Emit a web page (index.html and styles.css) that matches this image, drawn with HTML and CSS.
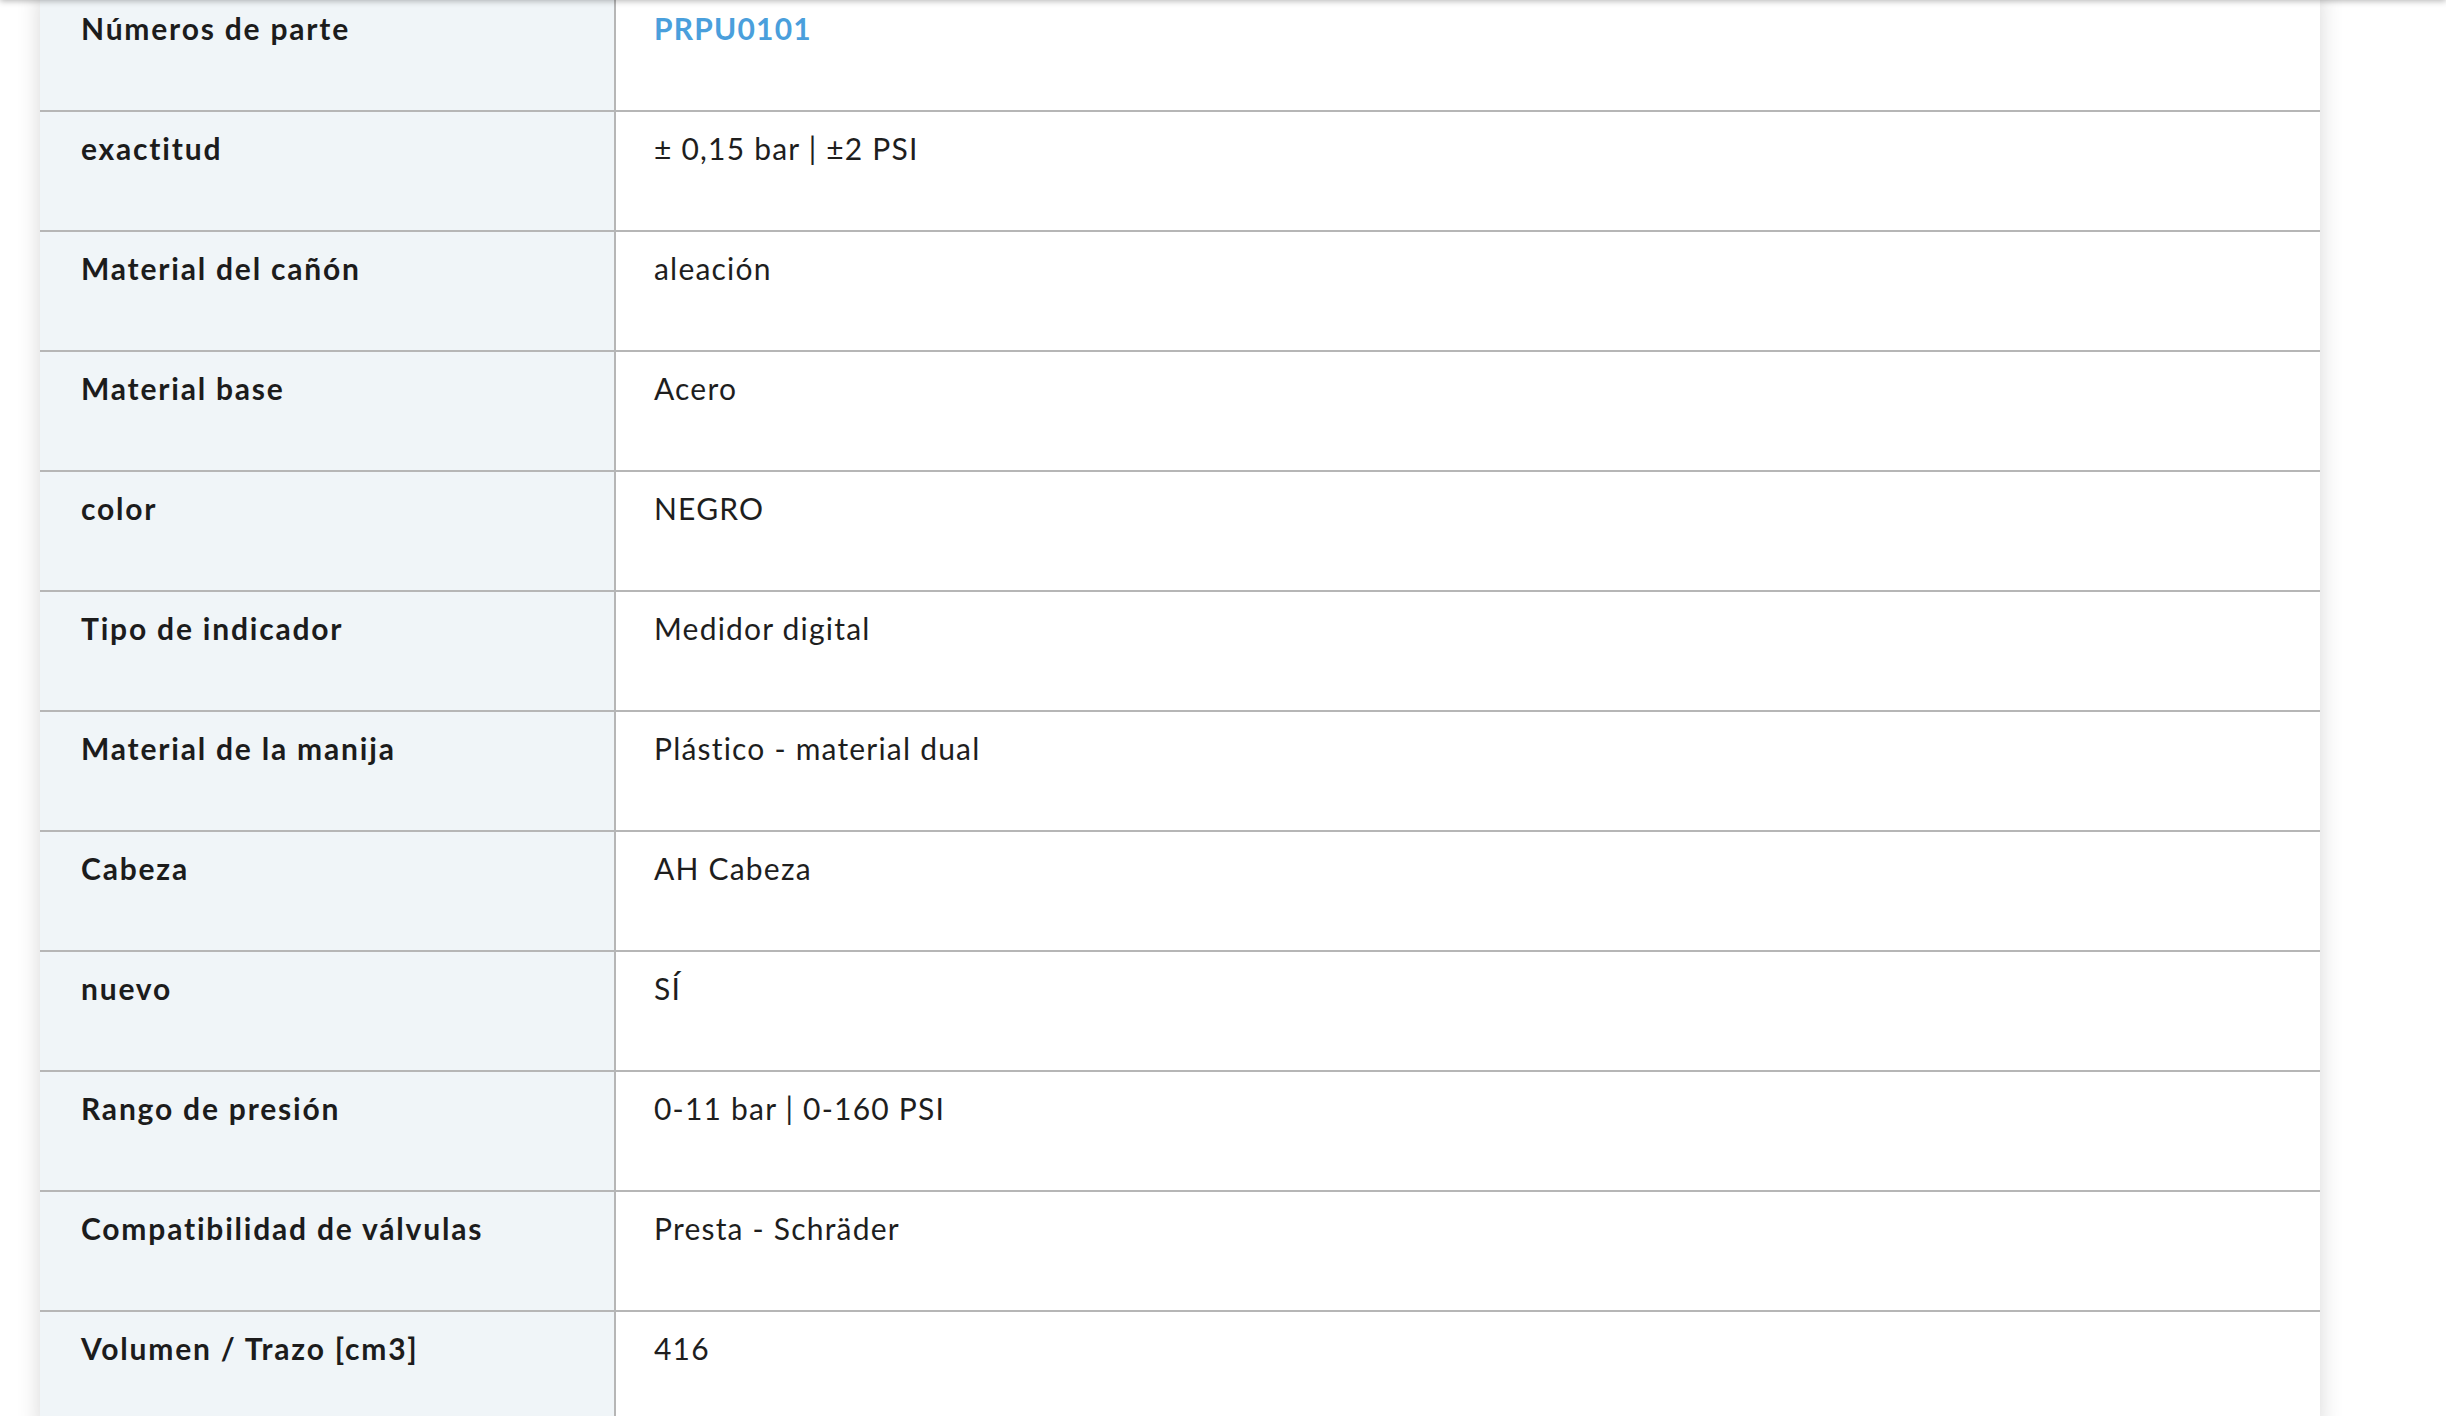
FILE: index.html
```html
<!DOCTYPE html>
<html lang="es">
<head>
<meta charset="utf-8">
<title>Especificaciones</title>
<link rel="stylesheet" href="styles.css">
</head>
<body>
<div class="topbar"></div>
<main class="page">
  <section class="specs">
    <div class="row"><div class="label">Números de parte</div><div class="value"><a class="part" href="#">PRPU0101</a></div></div>
    <div class="row"><div class="label">exactitud</div><div class="value">± 0,15 bar | ±2 PSI</div></div>
    <div class="row"><div class="label">Material del cañón</div><div class="value">aleación</div></div>
    <div class="row"><div class="label">Material base</div><div class="value">Acero</div></div>
    <div class="row"><div class="label">color</div><div class="value">NEGRO</div></div>
    <div class="row"><div class="label">Tipo de indicador</div><div class="value">Medidor digital</div></div>
    <div class="row"><div class="label">Material de la manija</div><div class="value">Plástico - material dual</div></div>
    <div class="row"><div class="label">Cabeza</div><div class="value">AH Cabeza</div></div>
    <div class="row"><div class="label">nuevo</div><div class="value">SÍ</div></div>
    <div class="row"><div class="label">Rango de presión</div><div class="value">0-11 bar | 0-160 PSI</div></div>
    <div class="row"><div class="label">Compatibilidad de válvulas</div><div class="value">Presta - Schräder</div></div>
    <div class="row"><div class="label">Volumen / Trazo [cm3]</div><div class="value">416</div></div>
  </section>
</main>
</body>
</html>
```
FILE: styles.css
```css
html, body {
  margin: 0;
  padding: 0;
  background: #ffffff;
  overflow: hidden;
}
body {
  font-family: Lato, "Open Sans", "Liberation Sans", sans-serif;
  color: #1e1e1e;
}
.topbar {
  position: fixed;
  top: -20px;
  left: 0;
  right: 0;
  height: 20px;
  background: #ffffff;
  box-shadow: 0 1px 6px rgba(0, 0, 0, 0.3);
  z-index: 5;
}
.page {
  padding-left: 40px;
}
.specs {
  width: 2280px;
  margin-top: -8px;
  box-shadow: 0 0 22px rgba(0, 0, 0, 0.16);
  background: #ffffff;
}
.row {
  display: grid;
  grid-template-columns: 574px 1fr;
  height: 118px;
  border-bottom: 2px solid #b6b6b6;
}
.label {
  background: #f0f5f8;
  font-weight: 700;
  font-size: 30px;
  line-height: 36px;
  letter-spacing: 1.8px;
  padding: 18px 0 0 41px;
  color: #1c1c1c;
}
.value {
  border-left: 2px solid #b6b6b6;
  font-size: 30px;
  line-height: 36px;
  letter-spacing: 1.2px;
  padding: 18px 0 0 38px;
  color: #1e1e1e;
}
.part {
  color: #4a9fdc;
  font-weight: 700;
  text-decoration: none;
}
```
